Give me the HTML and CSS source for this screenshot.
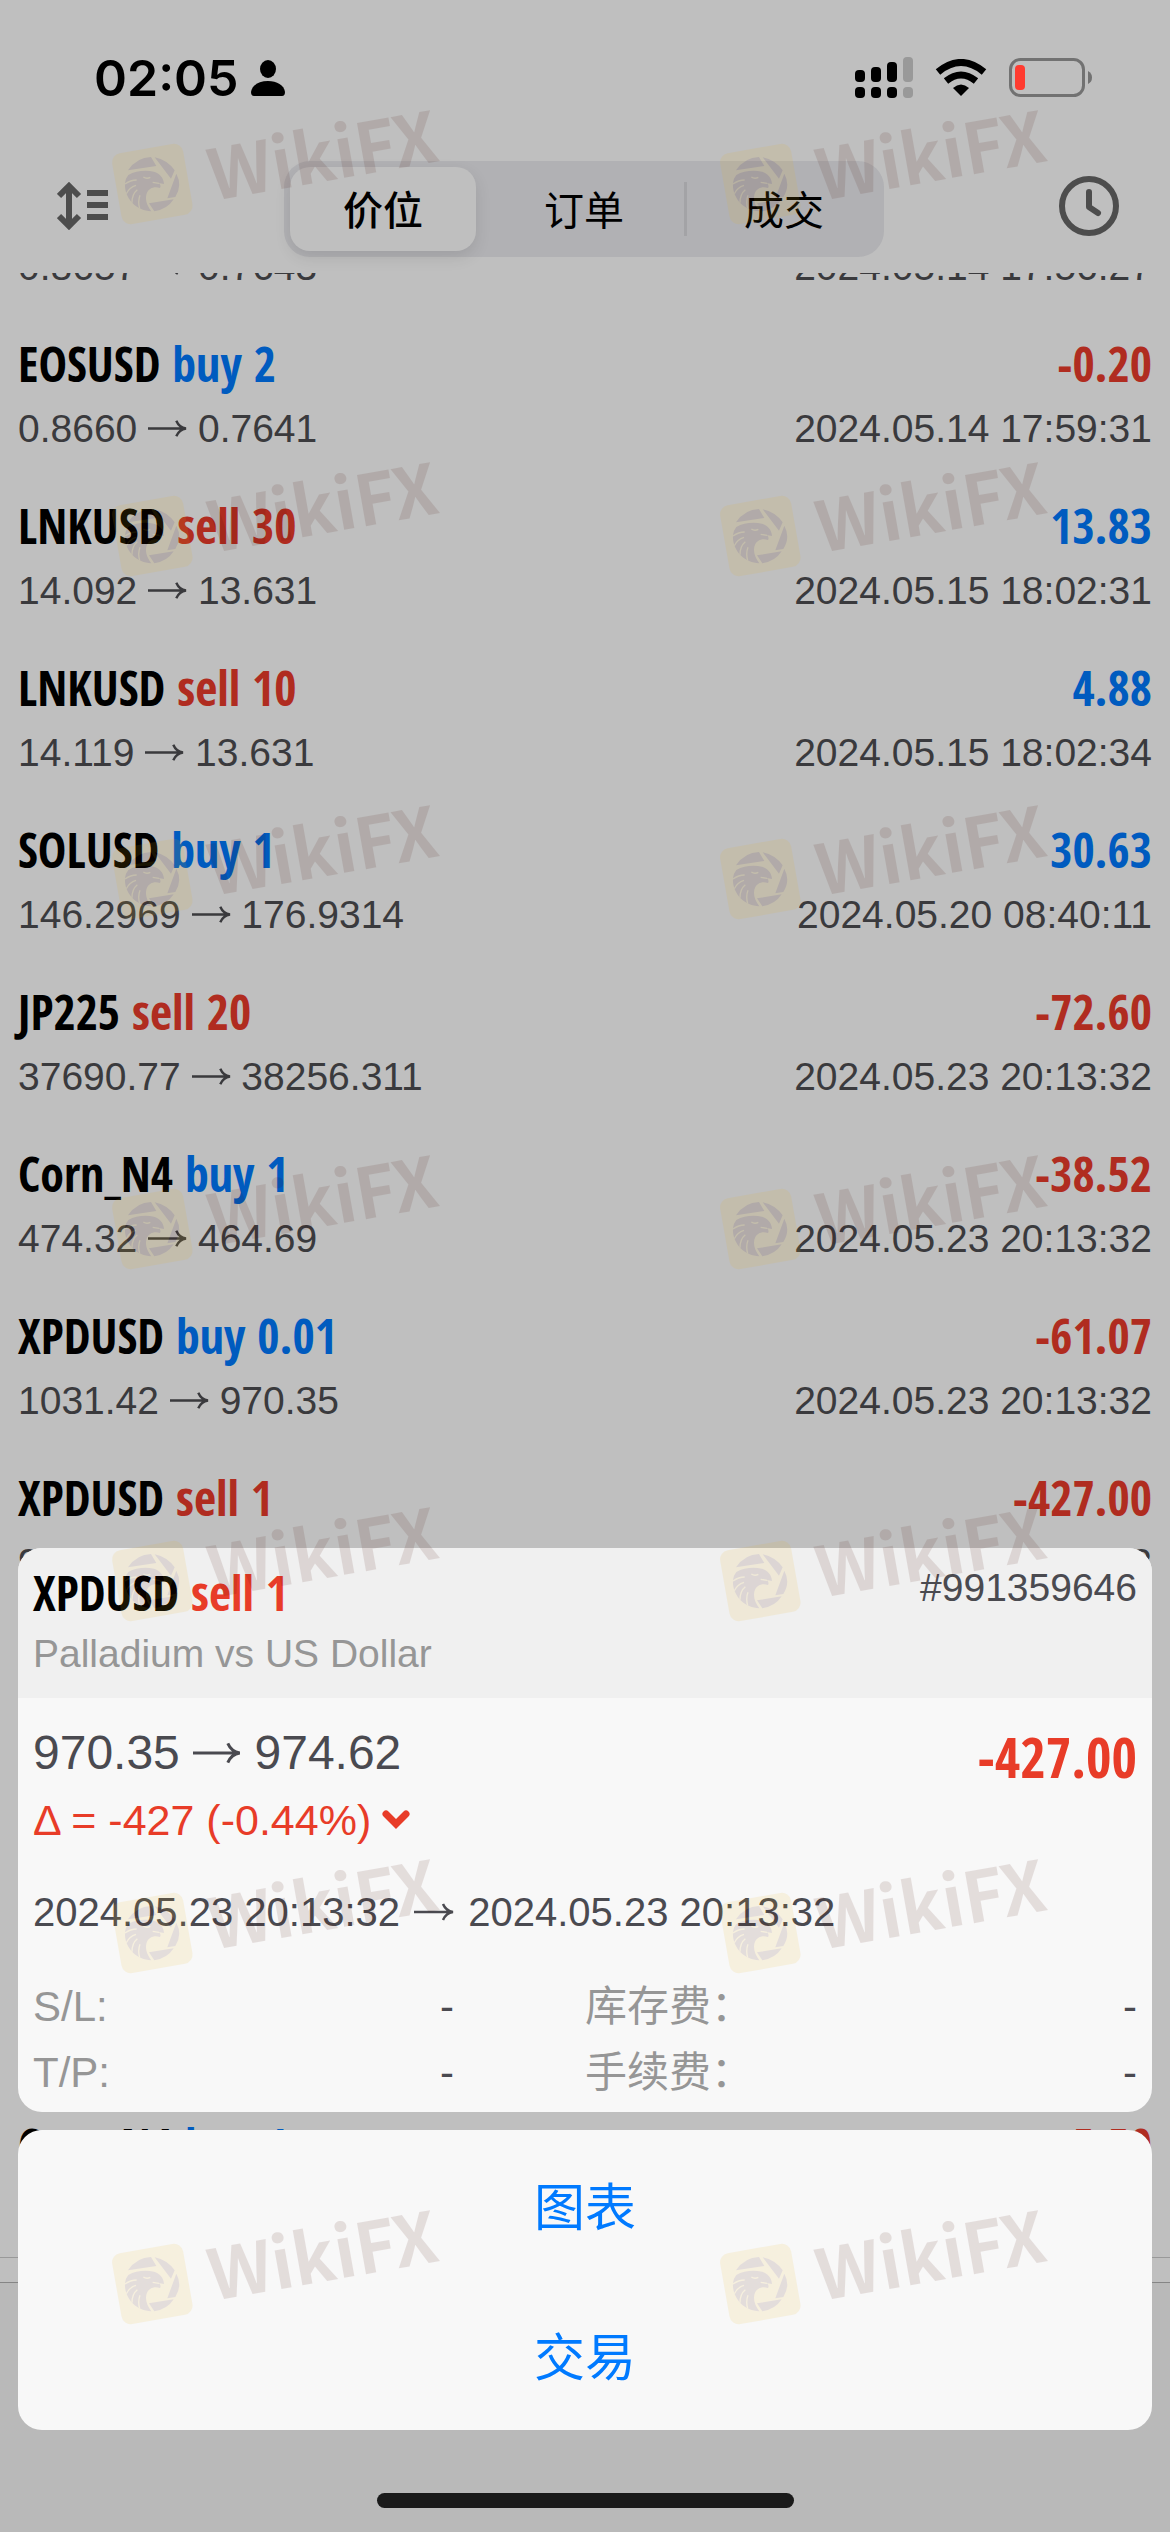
FILE: index.html
```
<!DOCTYPE html>
<html lang="zh-CN">
<head>
<meta charset="utf-8">
<meta name="viewport" content="width=device-width">
<title>成交</title>
<link rel="stylesheet" href="styles.css">
</head>
<body>
<svg class="defs" aria-hidden="true">
  <symbol id="arrow" viewBox="0 0 40 40">
    <path d="M0 20H39M29 12Q32 19 39 20Q32 21 29 28" fill="none" stroke="currentColor" stroke-width="2.5"/>
  </symbol>
  <symbol id="mark" viewBox="0 0 340 120" overflow="visible">
    <g fill="#460a00">
      <g transform="translate(-6 50) scale(.3333)">
        <rect x="37" y="30" width="216" height="216" rx="28" transform="rotate(-10 145 138)" fill="#e9b219"/>
        <path d="M72 97Q98 58 141 57L157 84ZM152 58Q190 66 212 97L201 122ZM217 107Q236 142 214 177L190 181ZM135 196L209 184Q190 214 151 220Z"/>
        <path d="M73 111C95 98 125 96 150 101C167 106 179 119 180 138L164 135C170 140 171 145 168 150C150 143 135 152 130 162C121 180 128 202 142 220C120 219 101 210 88 198C65 175 58 145 66 122Z"/>
        <path d="M63 138Q80 126 98 126M67 167Q76 148 96 142M84 194Q84 168 100 155M107 212Q101 190 108 172M118 117Q128 124 139 118M146 133L165 136" fill="none" stroke="#e9b219" stroke-width="4"/>
      </g>
      <text class="mark-text" transform="translate(103 113) rotate(-10)">WikiFX</text>
    </g>
  </symbol>
</svg>

<div class="app">
  <header class="status">
    <div class="status-left">
      <span class="clock-text">02:05</span>
      <svg width="34" height="38" viewBox="0 0 34 38"><ellipse cx="17" cy="10" rx="8" ry="9"/><path d="M3 37Q0 37 0 33C1 26 8 22 17 22S33 26 34 33Q34 37 31 37Z"/></svg>
    </div>
    <div class="status-right">
      <svg width="58" height="42" viewBox="0 0 58 42"><rect y="13" width="10" height="12" rx="4"/><rect x="16" y="10" width="10" height="15" rx="4"/><rect x="32" y="5" width="10" height="20" rx="4"/><rect y="30" width="10" height="11" rx="4"/><rect x="16" y="30" width="10" height="11" rx="4"/><rect x="32" y="30" width="10" height="11" rx="4"/><g fill="#999"><rect x="48" width="10" height="25" rx="4"/><rect x="48" y="30" width="10" height="11" rx="4"/></g></svg>
      <svg width="52" height="38" viewBox="0 0 52 38"><path d="M26 37L18 29Q26 22 34 29Z"/><g fill="none" stroke="#000" stroke-width="7"><path d="M11 22Q26 10 41 22"/><path d="M3 13Q26 -6 49 13"/></g></svg>
      <svg width="84" height="40" viewBox="0 0 84 40"><rect x="1.500" y="1.500" width="73" height="36" rx="10" fill="none" stroke="#727272" stroke-width="3"/><path d="M79 13Q83 15 83 19.500T79 26Z" fill="#727272"/><rect x="6" y="7" width="10" height="25" rx="4" fill="#ff3b30"/></svg>
    </div>
  </header>

  <nav class="bar">
    <button class="icon-btn" aria-label="排序">
      <svg width="52" height="48" viewBox="0 0 52 48"><g fill="none" stroke="#4d4d4d" stroke-width="6"><path d="M12 4V44M2 14L12 4L22 14M2 34L12 44L22 34"/><path d="M30 11H51M30 23H51M30 35H51"/></g></svg>
    </button>
    <div class="segments">
      <button class="segment selected">价位</button>
      <button class="segment">订单</button>
      <button class="segment divided">成交</button>
    </div>
    <button class="icon-btn" aria-label="历史">
      <svg width="60" height="60" viewBox="0 0 60 60"><g fill="none" stroke="#4d4d4d" stroke-linecap="round" stroke-linejoin="round" stroke-width="6"><circle cx="30" cy="30" r="27"/><path d="M30 16V31L39 37"/></g></svg>
    </button>
  </nav>

  <main class="history">
    <ul class="deals">
      <li class="deal"><b>EOSUSD <i class="buy">buy 1</i></b><b class="loss">-0.10</b><span>0.8657 <svg class="arrow"><use href="#arrow"/></svg> 0.7643</span><span>2024.05.14 17:56:27</span></li>
      <li class="deal"><b>EOSUSD <i class="buy">buy 2</i></b><b class="loss">-0.20</b><span>0.8660 <svg class="arrow"><use href="#arrow"/></svg> 0.7641</span><span>2024.05.14 17:59:31</span></li>
      <li class="deal"><b>LNKUSD <i class="sell">sell 30</i></b><b class="gain">13.83</b><span>14.092 <svg class="arrow"><use href="#arrow"/></svg> 13.631</span><span>2024.05.15 18:02:31</span></li>
      <li class="deal"><b>LNKUSD <i class="sell">sell 10</i></b><b class="gain">4.88</b><span>14.119 <svg class="arrow"><use href="#arrow"/></svg> 13.631</span><span>2024.05.15 18:02:34</span></li>
      <li class="deal"><b>SOLUSD <i class="buy">buy 1</i></b><b class="gain">30.63</b><span>146.2969 <svg class="arrow"><use href="#arrow"/></svg> 176.9314</span><span>2024.05.20 08:40:11</span></li>
      <li class="deal"><b>JP225 <i class="sell">sell 20</i></b><b class="loss">-72.60</b><span>37690.77 <svg class="arrow"><use href="#arrow"/></svg> 38256.311</span><span>2024.05.23 20:13:32</span></li>
      <li class="deal"><b>Corn_N4 <i class="buy">buy 1</i></b><b class="loss">-38.52</b><span>474.32 <svg class="arrow"><use href="#arrow"/></svg> 464.69</span><span>2024.05.23 20:13:32</span></li>
      <li class="deal"><b>XPDUSD <i class="buy">buy 0.01</i></b><b class="loss">-61.07</b><span>1031.42 <svg class="arrow"><use href="#arrow"/></svg> 970.35</span><span>2024.05.23 20:13:32</span></li>
      <li class="deal"><b>XPDUSD <i class="sell">sell 1</i></b><b class="loss">-427.00</b><span>970.35 <svg class="arrow"><use href="#arrow"/></svg> 974.62</span><span>2024.05.23 20:13:32</span></li>
      <li class="deal"></li>
      <li class="deal"></li>
      <li class="deal"></li>
      <li class="deal"><b>Corn_N4 <i class="buy">buy 1</i></b><b class="loss">-5.50</b></li>
    </ul>
  </main>
  <div class="strip"></div>
  <footer class="home"><div class="home-bar"></div></footer>

  <div class="sheet" role="dialog" aria-label="XPDUSD">
    <section class="card">
      <div class="card-head">
        <b class="symbol">XPDUSD <i class="sell">sell 1</i></b>
        <span class="ticket">#991359646</span>
        <span class="muted name">Palladium vs US Dollar</span>
      </div>
      <div class="card-body">
        <div class="prices">
          <span class="price">970.35 <svg class="arrow"><use href="#arrow"/></svg> 974.62</span>
          <b class="profit sell">-427.00</b>
        </div>
        <div class="delta sell">Δ = -427 (-0.44%) <svg width="28" height="20" viewBox="0 0 28 20"><path d="M4 4L14 14L24 4" fill="none" stroke="currentColor" stroke-width="7" stroke-linecap="round"/></svg></div>
        <div class="period">2024.05.23 20:13:32 <svg class="arrow"><use href="#arrow"/></svg> 2024.05.23 20:13:32</div>
        <dl class="facts">
          <div><dt>S/L:</dt><dd>-</dd></div>
          <div><dt>库存费：</dt><dd>-</dd></div>
          <div><dt>T/P:</dt><dd>-</dd></div>
          <div><dt>手续费：</dt><dd>-</dd></div>
        </dl>
      </div>
    </section>
    <div class="actions">
      <button class="action">图表</button>
      <button class="action">交易</button>
    </div>
  </div>

  <div class="marks" aria-hidden="true">
    <svg class="mark"><use href="#mark"/></svg><svg class="mark"><use href="#mark"/></svg>
    <svg class="mark"><use href="#mark"/></svg><svg class="mark"><use href="#mark"/></svg>
    <svg class="mark"><use href="#mark"/></svg><svg class="mark"><use href="#mark"/></svg>
    <svg class="mark"><use href="#mark"/></svg><svg class="mark"><use href="#mark"/></svg>
    <svg class="mark"><use href="#mark"/></svg><svg class="mark"><use href="#mark"/></svg>
    <svg class="mark"><use href="#mark"/></svg><svg class="mark"><use href="#mark"/></svg>
    <svg class="mark"><use href="#mark"/></svg><svg class="mark"><use href="#mark"/></svg>
  </div>
</div>
</body>
</html>
```
FILE: styles.css
```
* { box-sizing: border-box; }
body {
  margin: 0;
  background: #bfbfbf;
  color: #000;
  font-family: "Liberation Sans", "Noto Sans CJK SC", sans-serif;
}
button {
  border: 0;
  padding: 0;
  background: none;
  color: inherit;
  font-family: inherit;
}
svg { display: block; flex: none; }
i { font-style: normal; }
.defs { position: absolute; width: 0; height: 0; }

.app {
  position: relative;
  display: flex;
  flex-direction: column;
  height: 100vh;
  overflow: hidden;
}

/* status bar */
.status {
  display: flex;
  justify-content: space-between;
  align-items: center;
  height: 156px;
  padding: 0 77px 0 94px;
}
.status-left { display: flex; align-items: center; gap: 12px; }
.clock-text { font: 600 50px/60px Inter, sans-serif; }
.status-right { display: flex; align-items: center; gap: 22px; }

/* segmented control bar */
.bar {
  display: flex;
  justify-content: space-between;
  align-items: center;
  height: 117px;
  padding: 0 51px 11px 57px;
}
.icon-btn { padding-bottom: 6px; }
.segments {
  display: flex;
  width: 600px;
  height: 96px;
  padding: 6px 0 6px 6px;
  border-radius: 26px;
  background: #b1b1b4;
}
.segment {
  position: relative;
  flex: 1;
  padding-bottom: 3px;
  border-radius: 20px;
  font-size: 40px;
}
.segment.selected {
  flex: none;
  width: 186px;
  margin-right: 8px;
  background: #bfbfbf;
  font-weight: 500;
  box-shadow: 0 6px 16px rgba(0, 0, 0, .1);
}
.segment.divided::before {
  content: "";
  position: absolute;
  left: 0;
  top: 15px;
  bottom: 15px;
  width: 3px;
  background: #a3a3a6;
}

/* deal list */
.history { flex: 1; min-height: 0; overflow: hidden; }
.deals { margin: -104px 0 0; padding: 0; list-style: none; }
.deal {
  display: grid;
  grid-template-columns: 1fr auto;
  grid-template-rows: 66px 44px;
  row-gap: 10px;
  height: 162px;
  padding: 0 18px;
  color: #3a3a3d;
  font-size: 39px;
  line-height: 44px;
  white-space: nowrap;
}
.deal b {
  color: #000;
  font: 700 48px/66px "Open Sans Condensed", "Open Sans", sans-serif;
}
.deal b:nth-child(2) { text-align: right; }
.deal .buy, .deal .gain { color: #005bbf; }
.deal .sell, .deal .loss { color: #b02c20; }
.arrow {
  display: inline-block;
  width: 1em;
  height: 1em;
  vertical-align: -6px;
}
.strip {
  height: 26px;
  border-top: 1px solid #999;
  border-bottom: 1px solid #858585;
}
.home {
  display: flex;
  justify-content: center;
  align-items: flex-end;
  height: 249px;
  padding-bottom: 24px;
  background: #b9b9b9;
}
.home-bar { width: 417px; height: 15px; border-radius: 8px; background: #1a1a1a; }

/* deal details and actions over the list */
.sheet {
  position: absolute;
  left: 18px;
  right: 18px;
  bottom: 102px;
  display: flex;
  flex-direction: column;
  gap: 18px;
}
.card { overflow: hidden; border-radius: 24px; background: #f8f8f8; color: #4a4a50; }
.sheet .sell { color: #e83c28; }
.muted, dt { color: #969696; }
.card-head {
  display: grid;
  grid-template-columns: 1fr auto;
  grid-template-rows: 66px 44px;
  row-gap: 6px;
  height: 150px;
  padding: 12px 15px 0;
  background: #f0f0f0;
  font-size: 39px;
  line-height: 44px;
}
.symbol { color: #000; font: 700 48px/66px "Open Sans Condensed", "Open Sans", sans-serif; }
.ticket { padding-top: 6px; }
.card-body { padding: 22px 15px 6px; }
.prices { display: flex; justify-content: space-between; height: 70px; }
.price { font-size: 48px; line-height: 66px; }
.price .arrow { vertical-align: -8px; }
.profit { font: 700 55px/74px "Open Sans Condensed", "Open Sans", sans-serif; }
.delta { display: flex; align-items: center; gap: 11px; font-size: 43px; line-height: 60px; }
.period { margin-top: 34px; font-size: 40px; line-height: 56px; }
.period .arrow { margin: 0 3px; }
.facts {
  display: grid;
  grid-template-columns: 1fr 1fr;
  margin: 34px 0 0;
  font-size: 42px;
  line-height: 66px;
}
.facts div { display: flex; justify-content: space-between; height: 66px; }
.facts div:nth-child(odd) { padding-right: 131px; }
dd { margin: 0; }
.actions {
  display: flex;
  flex-direction: column;
  border-radius: 24px;
  background: #f8f8f8;
}
.action { height: 150px; padding-bottom: 3px; color: #007aff; font-size: 51px; }

/* brand marks over the whole screen */
.marks {
  position: absolute;
  left: 110px;
  top: 88px;
  display: grid;
  grid-template-columns: 608px 340px;
  grid-template-rows: 352px 343px 350px 352px 352px 351px;
  opacity: .11;
  pointer-events: none;
}
.mark { width: 340px; height: 120px; overflow: visible; }
.mark-text { font: 700 70px "Noto Sans CJK SC", sans-serif; }
```
